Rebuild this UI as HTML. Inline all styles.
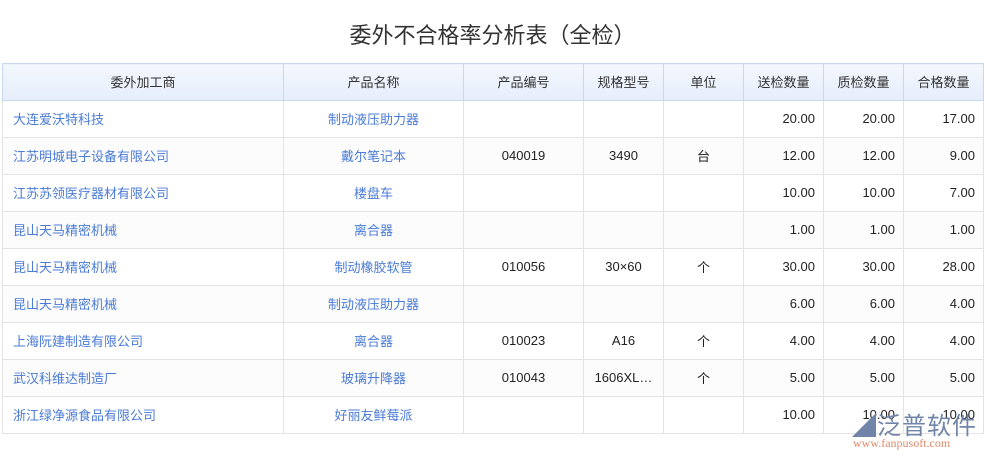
<!DOCTYPE html>
<html><head><meta charset="utf-8"><style>
body{margin:0;background:#fff;width:985px;height:455px;overflow:hidden;font-family:"Liberation Sans","Noto Sans CJK SC",sans-serif;position:relative}
.t{position:absolute;top:18px;left:0;width:985px;text-align:center;font-size:22px;color:#333}
table{position:absolute;left:2px;top:63px;border-collapse:collapse;table-layout:fixed;font-size:13px}
td,th{border:1px solid #e3e3e3;height:36px;padding:0 8px 2px;box-sizing:border-box;white-space:nowrap;overflow:hidden}
th{font-weight:normal;color:#333;background:linear-gradient(#f3f7fd,#e6eefb);border-color:#c6d9ee;height:37px}
td{color:#222;text-align:center;height:37px}
td.l{text-align:left;color:#4a7bd6;padding-left:10px}
td.b{color:#4a7bd6}
td.r{text-align:right}
tr:nth-child(odd) td{background:#fcfcfc}
.wm{position:absolute;left:852px;top:406px;font-size:24px;color:#7085a8;letter-spacing:1px}
.wm2{position:absolute;left:853px;top:436px;font-size:12px;color:#e08a6a;font-family:"Liberation Serif",serif}
</style></head><body>
<div class="t">委外不合格率分析表（全检）</div>
<table>
<colgroup><col style="width:281px"><col style="width:180px"><col style="width:120px"><col style="width:80px"><col style="width:80px"><col style="width:80px"><col style="width:80px"><col style="width:80px"></colgroup>
<tr><th>委外加工商</th><th>产品名称</th><th>产品编号</th><th>规格型号</th><th>单位</th><th>送检数量</th><th>质检数量</th><th>合格数量</th></tr>
<tr><td class="l">大连爱沃特科技</td><td class="b">制动液压助力器</td><td></td><td></td><td></td><td class="r">20.00</td><td class="r">20.00</td><td class="r">17.00</td></tr>
<tr><td class="l">江苏明城电子设备有限公司</td><td class="b">戴尔笔记本</td><td>040019</td><td>3490</td><td>台</td><td class="r">12.00</td><td class="r">12.00</td><td class="r">9.00</td></tr>
<tr><td class="l">江苏苏领医疗器材有限公司</td><td class="b">楼盘车</td><td></td><td></td><td></td><td class="r">10.00</td><td class="r">10.00</td><td class="r">7.00</td></tr>
<tr><td class="l">昆山天马精密机械</td><td class="b">离合器</td><td></td><td></td><td></td><td class="r">1.00</td><td class="r">1.00</td><td class="r">1.00</td></tr>
<tr><td class="l">昆山天马精密机械</td><td class="b">制动橡胶软管</td><td>010056</td><td>30×60</td><td>个</td><td class="r">30.00</td><td class="r">30.00</td><td class="r">28.00</td></tr>
<tr><td class="l">昆山天马精密机械</td><td class="b">制动液压助力器</td><td></td><td></td><td></td><td class="r">6.00</td><td class="r">6.00</td><td class="r">4.00</td></tr>
<tr><td class="l">上海阮建制造有限公司</td><td class="b">离合器</td><td>010023</td><td>A16</td><td>个</td><td class="r">4.00</td><td class="r">4.00</td><td class="r">4.00</td></tr>
<tr><td class="l">武汉科维达制造厂</td><td class="b">玻璃升降器</td><td>010043</td><td>1606XL…</td><td>个</td><td class="r">5.00</td><td class="r">5.00</td><td class="r">5.00</td></tr>
<tr><td class="l">浙江绿净源食品有限公司</td><td class="b">好丽友鲜莓派</td><td></td><td></td><td></td><td class="r">10.00</td><td class="r">10.00</td><td class="r">10.00</td></tr>
</table>
<div class="wm">◢泛普软件</div>
<div class="wm2">www.fanpusoft.com</div>
</body></html>
